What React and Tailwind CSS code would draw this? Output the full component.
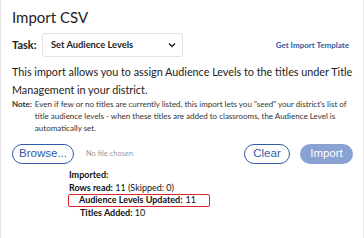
export default function App() {
  return (
    <div
      className="w-[364px] h-[238px] bg-white border-x border-[#e6e6e6] overflow-hidden text-[#222]"
      style={{ fontFamily: 'Lato, "Open Sans", sans-serif' }}
    >
      <div className="px-[11px] pt-[7px]">
        <h1 className="text-[15px] leading-[20px] text-[#222]">Import CSV</h1>

        <div className="flex items-center mt-[6px] h-[24px]">
          <span className="text-[11px] font-bold w-[30px]">Task:</span>
          <div className="w-[141px] h-[24px] border border-[#e2e2e2] rounded-[3px] flex items-center justify-between pl-[8px] pr-[6px]">
            <span className="text-[9.3px] font-bold">Set Audience Levels</span>
            <svg width="8" height="6" viewBox="0 0 8 6">
              <path d="M1 1.5 L4 4.5 L7 1.5" fill="none" stroke="#222" strokeWidth="1.5" />
            </svg>
          </div>
          <a className="ml-auto mr-[3px] text-[8px] font-bold text-[#2f5aa8]">Get Import Template</a>
        </div>

        <p className="mt-[6px] -mr-[8px] text-[10.8px] leading-[17.5px] text-[#222]">
          This import allows you to assign Audience Levels to the titles under Title Management in your district.
        </p>

        <div className="flex text-[8px] leading-[12px] text-[#333]">
          <span className="font-bold shrink-0 mr-[3px]">Note:</span>
          <span>
            Even if few or no titles are currently listed, this import lets you "seed" your district's list of title
            audience levels - when these titles are added to classrooms, the Audience Level is automatically set.
          </span>
        </div>

        <div className="mt-[10px] flex items-center">
          <button
            className="h-[20px] w-[62px] rounded-full border border-[#2f5aa8] text-[#2f5aa8] text-[11.5px]"
            style={{ fontFamily: '"Liberation Sans", Arial, sans-serif' }}
          >
            Browse...
          </button>
          <span className="ml-[12px] text-[7.5px] text-[#999]">No file chosen</span>
          <button
            className="ml-auto h-[20px] w-[46px] rounded-full border border-[#2f5aa8] text-[#2f5aa8] text-[11.5px]"
            style={{ fontFamily: '"Liberation Sans", Arial, sans-serif' }}
          >
            Clear
          </button>
          <button
            className="ml-[10px] mr-[-1px] h-[20px] w-[53px] rounded-full bg-[#8aa2d3] text-white text-[11.5px]"
            style={{ fontFamily: '"Liberation Sans", Arial, sans-serif' }}
          >
            Import
          </button>
        </div>

        <div className="mt-[5px] ml-[57px] text-[9px] leading-[12.5px] text-[#111]">
          <div className="font-bold">Imported:</div>
          <div>
            <span className="font-bold">Rows read:</span> 11 (Skipped: 0)
          </div>
          <div className="-ml-[1px] w-[142px] border-[1.5px] border-[#d9262b] rounded-[2px] pl-[10px] h-[13px] flex items-center">
            <span className="font-bold">Audience Levels Updated:</span>
            <span className="ml-[3px]">11</span>
          </div>
          <div className="pl-[11px]">
            <span className="font-bold">Titles Added:</span> 10
          </div>
        </div>
      </div>
    </div>
  );
}
